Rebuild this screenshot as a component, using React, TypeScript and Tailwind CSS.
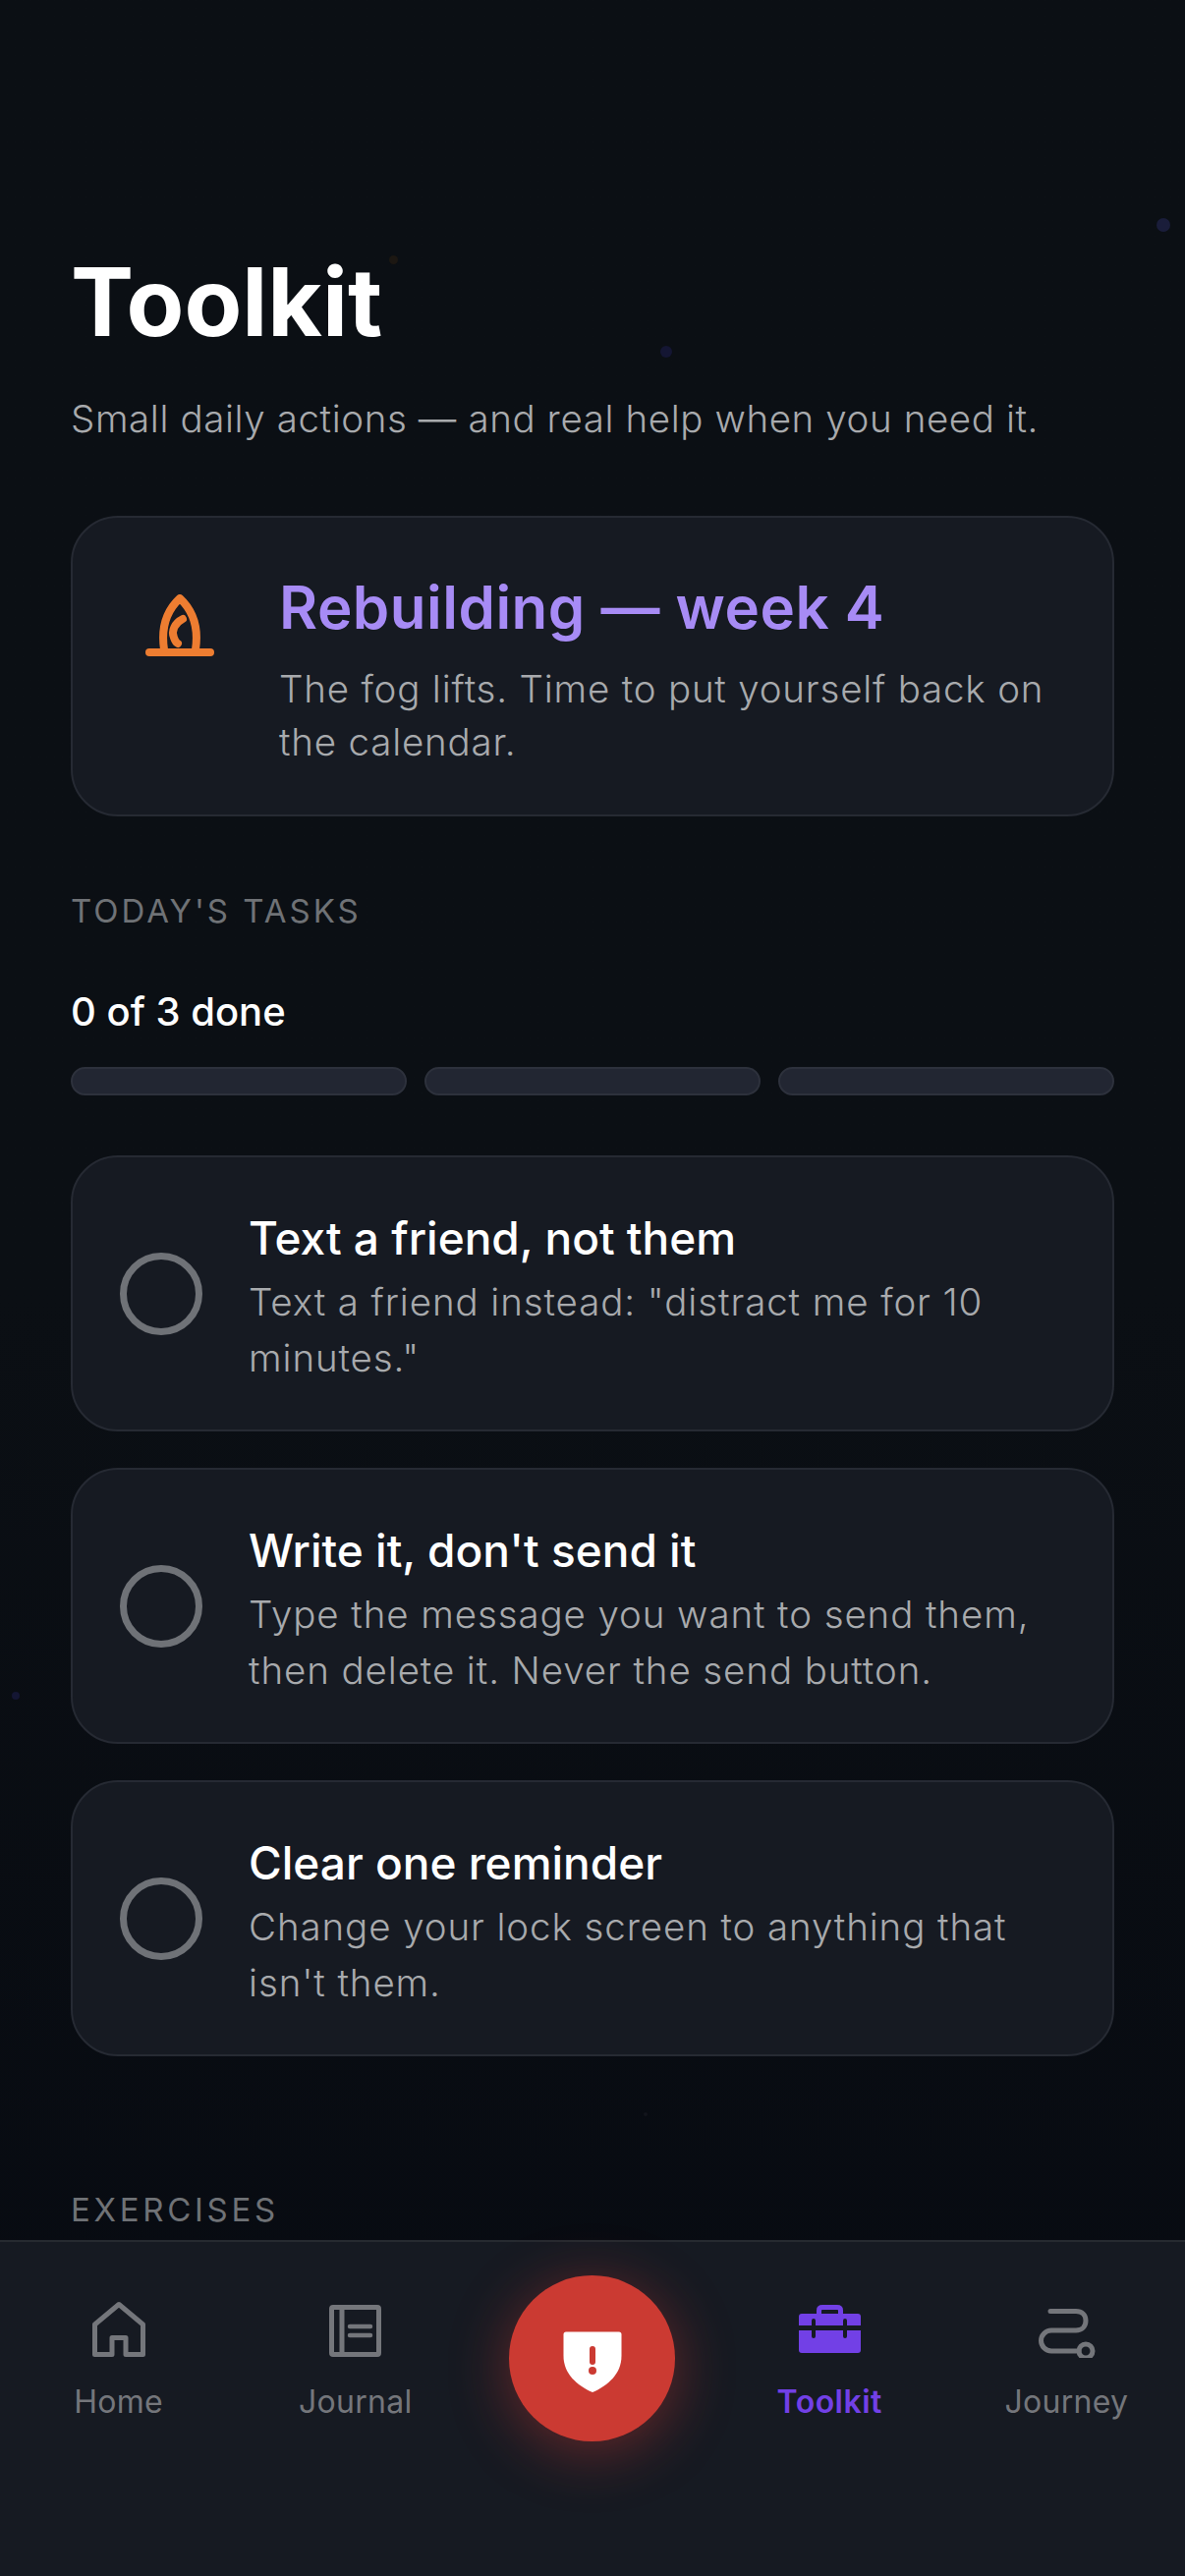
import React from "react";

const font = { fontFamily: "Inter, 'Noto Sans', sans-serif" };

const tasks = [
  { t: "Text a friend, not them", d: 'Text a friend instead: "distract me for 10 minutes."' },
  { t: "Write it, don't send it", d: "Type the message you want to send them, then delete it. Never the send button." },
  { t: "Clear one reminder", d: "Change your lock screen to anything that isn't them." },
];

const dots: [number, number, number, string][] = [
  [1177, 222, 14, "bg-[#1a1d3a]"],
  [396, 260, 9, "bg-[#1c1712]"],
  [672, 352, 12, "bg-[#141633]"],
  [12, 1722, 8, "bg-[#141633]"],
  [655, 2150, 4, "bg-[#12151c]"],
  [380, 1100, 5, "bg-[#12151c]"],
];

function Flame() {
  return (
    <svg className="mt-[78px] shrink-0 self-start" width="70" height="64" viewBox="0 0 70 64" fill="none" stroke="#ed7d31" strokeWidth="8" strokeLinecap="round" strokeLinejoin="round">
      <path d="M4 59H66" />
      <path d="M19 56C16 36 20 18 35 4C50 18 54 36 51 56" />
      <path d="M38 25C30 29 26 37 29 44C30 47 31 49 33 50" />
    </svg>
  );
}

const NavLabel = ({ c, children }: { c: string; children: string }) => (
  <span className={`mt-[25px] text-[32px] leading-[40px] tracking-[0.3px] ${c}`}>{children}</span>
);

export default function App() {
  return (
    <div style={font} className="relative flex h-[2622px] w-[1206px] flex-col overflow-hidden bg-gradient-to-b from-[#0b0f14] via-[#0b0f14] to-[#070a11] text-white">
      {dots.map(([x, y, s, c], i) => (
        <span key={i} className={`absolute rounded-full ${c}`} style={{ left: x, top: y, width: s, height: s }} />
      ))}

      <main className="relative flex-1 overflow-hidden px-[72px] pt-[252px]">
        <h1 className="text-[96px] font-bold leading-[110px]">Toolkit</h1>
        <p className="mt-[39px] text-[38.5px] font-light leading-[50px] tracking-[0.6px] text-[#a8aaad]">
          Small daily actions — and real help when you need it.
        </p>

        <section className="mt-[74px] flex h-[306px] items-center rounded-[48px] border-2 border-[#262a33] bg-[#161a22] pl-[74px] pr-[60px]">
          <Flame />
          <div className="ml-[66px] min-w-0 flex-1 pt-[8px]">
            <h2 className="text-[60px] font-semibold leading-[70px] tracking-[0.5px] text-[#a78bf5]">Rebuilding — week 4</h2>
            <p className="mt-[21px] text-[38.5px] font-light leading-[54px] tracking-[0.8px] text-[#a8aaad]">
              The fog lifts. Time to put yourself back on the calendar.
            </p>
          </div>
        </section>

        <h3 className="mt-[74px] text-[33px] font-normal leading-[44px] tracking-[3px] text-[#6f7276]">TODAY'S TASKS</h3>
        <p className="mt-[57px] text-[40px] font-medium leading-[48px]">0 of 3 done</p>

        <div className="mt-[32px] flex gap-[18px]">
          {[0, 1, 2].map((i) => (
            <div key={i} className="h-[29px] flex-1 rounded-full border-2 border-[#2d313c] bg-[#222632]" />
          ))}
        </div>

        <div className="mt-[61px] flex flex-col gap-[37px]">
          {tasks.map((k) => (
            <article key={k.t} className="flex h-[281px] items-center rounded-[48px] border-2 border-[#262a33] bg-[#161a22] pl-[48px] pr-[60px]">
              <span className="h-[84px] w-[84px] shrink-0 rounded-full border-[7px] border-[#6f7277]" />
              <div className="ml-[47px] min-w-0 flex-1 pt-[10px]">
                <h4 className="text-[46px] font-medium leading-[54px]">{k.t}</h4>
                <p className="mt-[10px] text-[38.5px] font-light leading-[57px] tracking-[0.9px] text-[#a8aaad]">{k.d}</p>
              </div>
            </article>
          ))}
        </div>

        <h3 className="mt-[134px] text-[33px] font-normal leading-[44px] tracking-[3.7px] text-[#6f7276]">EXERCISES</h3>
      </main>

      <nav className="relative grid h-[342px] shrink-0 grid-cols-5 border-t-2 border-[#262a30] bg-[#161a22] pt-[58px]">
        <div className="flex flex-col items-center">
          <svg width="60" height="60" viewBox="0 0 60 60" fill="none" stroke="#74767b" strokeWidth="5" strokeLinejoin="round">
            <path d="M5.5 56.5V26L30 5.5L54.5 26V56.5H37V39.5H23V56.5Z" />
          </svg>
          <NavLabel c="text-[#74767b]">Home</NavLabel>
        </div>
        <div className="flex flex-col items-center">
          <svg width="60" height="60" viewBox="0 0 60 60" fill="none" stroke="#74767b" strokeWidth="5" strokeLinejoin="round">
            <rect x="5.5" y="8.5" width="48" height="48" rx="1.5" />
            <path d="M16 8.5V56.5" />
            <path d="M24 28H45M24 37H45" strokeWidth="4.5" strokeLinecap="round" />
          </svg>
          <NavLabel c="text-[#74767b]">Journal</NavLabel>
        </div>
        <div className="flex justify-center">
          <button className="-mt-[24px] flex h-[169px] w-[169px] items-center justify-center rounded-full bg-[#cb3a32] shadow-[0_10px_60px_rgba(203,58,50,0.45)]">
            <svg className="mt-[6px]" width="60" height="62" viewBox="0 0 60 62">
              <path d="M3 0.5H57C58.5 0.5 59.5 1.5 59.5 3V25C59.5 43 46 55 30 62C14 55 0.5 43 0.5 25V3C0.5 1.5 1.5 0.5 3 0.5Z" fill="#fff" />
              <rect x="27" y="15" width="6" height="19" rx="3" fill="#cb3a32" />
              <circle cx="30" cy="40" r="4" fill="#cb3a32" />
            </svg>
          </button>
        </div>
        <div className="flex flex-col items-center">
          <svg width="66" height="60" viewBox="0 0 66 60">
            <path d="M22.5 15V11.5C22.5 9.5 24 8.5 26 8.5H41C43 8.5 44.5 9.5 44.5 11.5V15" fill="none" stroke="#7240e6" strokeWidth="5" />
            <path d="M2 18C2 16 3 15 5 15H62C64 15 65 16 65 18V27H2Z" fill="#7240e6" />
            <path d="M2 32H65V52C65 54 64 55 62 55H5C3 55 2 54 2 52Z" fill="#7240e6" />
            <path d="M17 22V38M49 22V38" stroke="#161a22" strokeWidth="4" strokeLinecap="round" />
          </svg>
          <NavLabel c="font-semibold tracking-[0.5px] text-[#7240e6]">Toolkit</NavLabel>
        </div>
        <div className="flex flex-col items-center">
          <svg width="60" height="60" viewBox="0 0 60 60" fill="none" stroke="#74767b" strokeWidth="5" strokeLinecap="round">
            <path d="M14 12.5H40C46 12.5 50 16 50 22C50 28 46 32 40 32H15C9 32 4.5 37 4.5 42.5C4.5 48 9 53 15 53H43" />
            <circle cx="50" cy="53" r="7" />
          </svg>
          <NavLabel c="text-[#74767b]">Journey</NavLabel>
        </div>
      </nav>
    </div>
  );
}
